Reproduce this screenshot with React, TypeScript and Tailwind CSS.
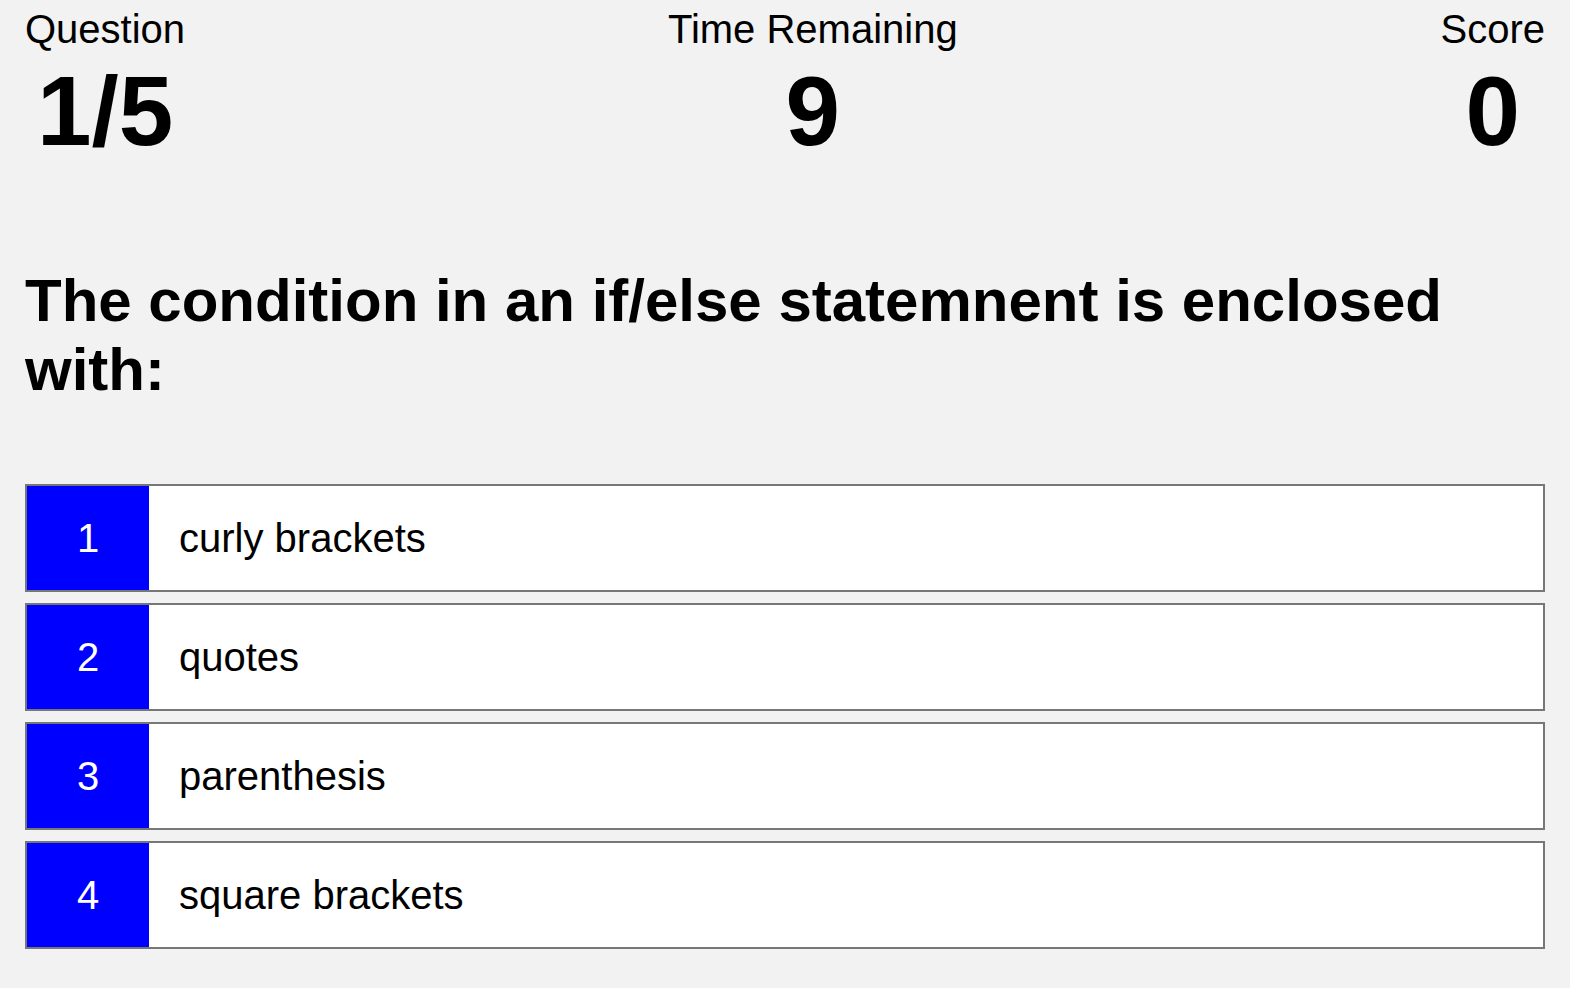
const choices = ['curly brackets', 'quotes', 'parenthesis', 'square brackets']

function Stat({ label, value }: { label: string; value: string | number }) {
  return (
    <div className="flex flex-col items-center">
      <div className="text-[40px] leading-[46px]">{label}</div>
      <div className="text-[98px] font-bold leading-[119px]">{value}</div>
    </div>
  )
}

export default function App() {
  return (
    <div className="min-h-screen bg-[#f2f2f2] px-[25px] pt-[6px] pb-10 text-black font-['Liberation_Sans',Arial,sans-serif]">
      <div className="flex justify-between">
        <Stat label="Question" value="1/5" />
        <Stat label="Time Remaining" value={9} />
        <Stat label="Score" value={0} />
      </div>

      <h1 className="mt-[95px] text-[60px] font-bold leading-[69px]">
        The condition in an if/else statemnent is enclosed with:
      </h1>

      <div className="mt-[80px] flex flex-col gap-[11px]">
        {choices.map((c, i) => (
          <button
            key={c}
            className="flex h-[108px] w-full border-2 border-[#777777] bg-white text-left text-[40px] leading-[46px]"
          >
            <span className="flex h-full w-[122px] shrink-0 items-center justify-center bg-[#0000ff] text-white">
              {i + 1}
            </span>
            <span className="flex h-full items-center pl-[30px]">{c}</span>
          </button>
        ))}
      </div>
    </div>
  )
}
